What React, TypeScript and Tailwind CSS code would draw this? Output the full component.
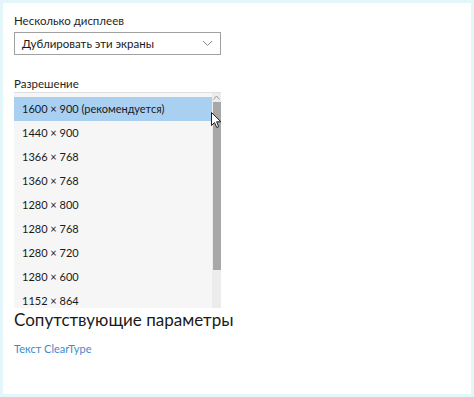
import React from 'react';

const resolutions = [
    '1600 × 900 (рекомендуется)',
    '1440 × 900',
    '1366 × 768',
    '1360 × 768',
    '1280 × 800',
    '1280 × 768',
    '1280 × 720',
    '1280 × 600',
    '1152 × 864',
];

export default function App() {
    return (
        <div
            className="w-[474px] h-[397px] bg-[#e3f7fb] p-[3px] overflow-hidden"
            style={{ fontFamily: 'Lato, "Noto Sans", sans-serif' }}
        >
            <div className="w-full h-full bg-white flex flex-col items-start pl-[11px] pt-[9px]">
                <p className="text-[11.5px] leading-[18px] text-[#1f1f1f]">Несколько дисплеев</p>

                <div className="mt-[2px] w-[207px] h-[23px] border border-[#a0a0a0] flex items-center justify-between pl-[7px] pr-[7px]">
                    <span className="text-[11.5px] text-[#1a1a1a]">Дублировать эти экраны</span>
                    <svg width="11" height="7" viewBox="0 0 11 7" fill="none">
                        <path d="M1 1l4.5 4.5L10 1" stroke="#888" strokeWidth="1" />
                    </svg>
                </div>

                <p className="mt-[21px] text-[11.5px] leading-[16px] text-[#1f1f1f]">Разрешение</p>

                <div className="relative w-[207px] h-[216px] bg-[#f6f6f6] border-t border-[#dedede] flex">
                    <div className="flex-1 flex flex-col pt-[4px] overflow-hidden">
                        {resolutions.map((r, i) => (
                            <div
                                key={i}
                                className={`h-[24px] shrink-0 flex items-center pl-[8px] text-[11px] text-[#1a1a1a] ${
                                    i === 0 ? 'bg-[#a9cff1]' : ''
                                }`}
                            >
                                {r}
                            </div>
                        ))}
                    </div>
                    <div className="w-[9px] flex flex-col items-center bg-[#ececec]">
                        <svg width="7" height="5" viewBox="0 0 7 5" className="mt-[2px]">
                            <path d="M0.5 4.5L3.5 1l3 3.5" stroke="#999" fill="none" />
                        </svg>
                        <div className="mt-[2px] w-[8px] h-[168px] bg-[#a8a8a8]" />
                    </div>

                    {/* mouse pointer */}
                    <svg
                        className="absolute left-[197px] top-[19px]"
                        width="11"
                        height="17"
                        viewBox="0 0 11 17"
                    >
                        <path
                            d="M0.5 0.5v13l3-3 2.2 5 2-0.9-2.1-4.8h4.3z"
                            fill="#fff"
                            stroke="#222"
                            strokeWidth="1"
                            strokeLinejoin="round"
                        />
                    </svg>
                </div>

                <p className="text-[17px] leading-[24px] text-[#1a1a1a]">Сопутствующие параметры</p>

                <p className="mt-[9px] text-[11px] text-[#3b8ccb]">Текст ClearType</p>
            </div>
        </div>
    );
}
